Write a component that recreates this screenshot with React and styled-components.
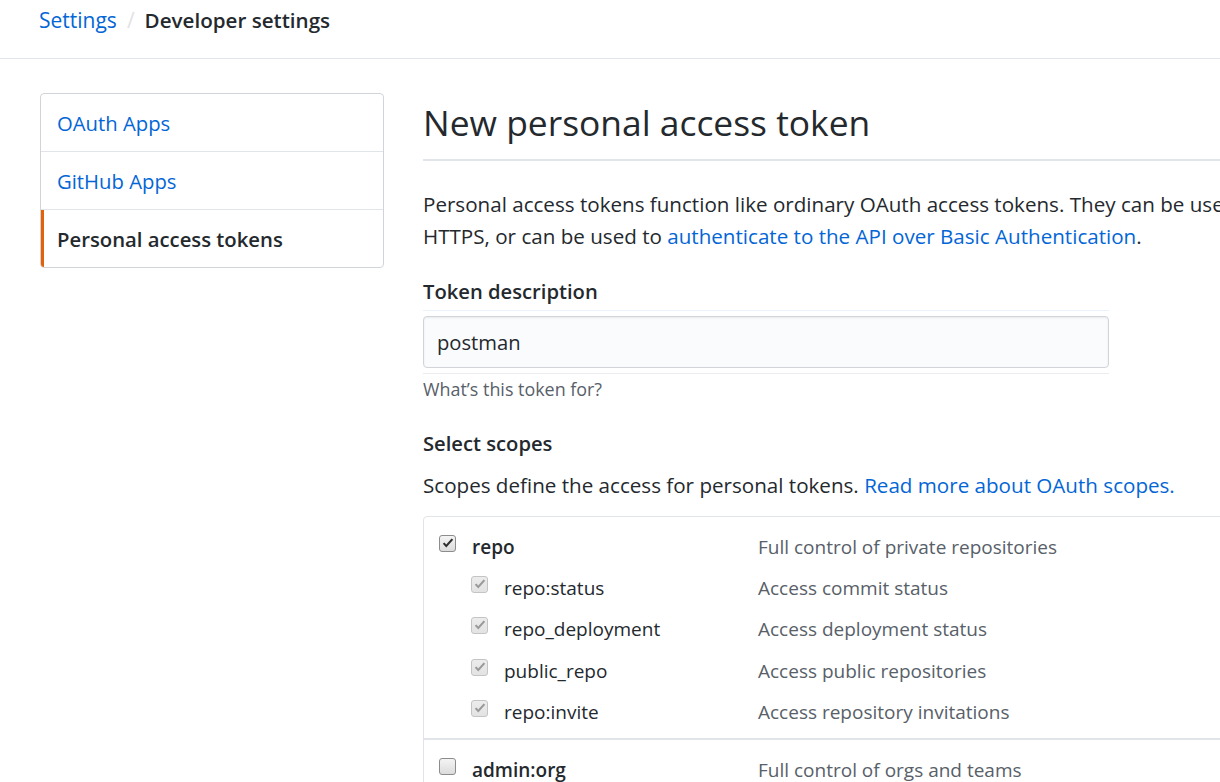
import React from "react";
import styled, { createGlobalStyle } from "styled-components";

const GlobalStyle = createGlobalStyle`
  html, body {
    margin: 0;
    padding: 0;
    overflow: hidden;
    background: #fff;
  }
  body {
    font-family: "Open Sans", "Noto Sans", sans-serif;
    color: #24292e;
  }
`;

const Page = styled.div`
  width: 1220px;
  height: 782px;
  overflow: hidden;
`;

const Header = styled.div`
  height: 59px;
  border-bottom: 1px solid #e1e4e8;
  box-sizing: border-box;
  padding-left: 39px;
  display: flex;
  align-items: center;
  padding-bottom: 18px;
  font-size: 21px;
`;

const Crumb = styled.a`
  color: #0366d6;
  text-decoration: none;
`;

const Slash = styled.span`
  color: #dfe2e5;
  margin: 0 10px;
`;

const Current = styled.span`
  font-weight: 600;
  color: #24292e;
  font-size: 20.6px;
`;

const Layout = styled.div`
  display: flex;
  align-items: flex-start;
  gap: 39px;
  padding: 34px 0 0 40px;
`;

const Sidebar = styled.nav`
  width: 344px;
  flex-shrink: 0;
  box-sizing: border-box;
  border: 1px solid #d1d5da;
  border-radius: 4px;
  overflow: hidden;
`;

const MenuItem = styled.a`
  display: flex;
  align-items: center;
  height: 58px;
  box-sizing: border-box;
  padding-left: ${(p) => (p.selected ? "13px" : "16px")};
  border-left: ${(p) => (p.selected ? "3px solid #e36209" : "none")};
  border-bottom: 1px solid #e1e4e8;
  font-size: 20.3px;
  color: ${(p) => (p.selected ? "#24292e" : "#0366d6")};
  font-weight: ${(p) => (p.selected ? 600 : 400)};
  text-decoration: none;
  &:last-child {
    border-bottom: none;
    height: 57px;
  }
`;

const Content = styled.main`
  width: 1100px;
  flex-shrink: 0;
`;

const Title = styled.h1`
  margin: 0;
  font-size: 35.4px;
  font-weight: 400;
  line-height: 42px;
  padding: 8px 0 16px;
  border-bottom: 2px solid #e1e4e8;
`;

const Lead = styled.p`
  margin: 27px 0 0;
  font-size: 20.6px;
  line-height: 32px;
  white-space: nowrap;
`;

const Link = styled.a`
  color: #0366d6;
  text-decoration: none;
`;

const Label = styled.h3`
  margin: ${(p) => p.top || "23px"} 0 0;
  font-size: 20.2px;
  font-weight: 600;
  line-height: 32px;
`;

const Field = styled.div`
  margin-top: 3px;
  padding: 5px 0 5px;
  width: 686px;
  border-top: 1px solid #eaf1fb;
  border-bottom: 1px solid #eaecef;
`;

const Input = styled.div`
  box-sizing: border-box;
  width: 686px;
  height: 52px;
  border: 1px solid #d1d5da;
  border-radius: 4px;
  background: #fafbfc;
  box-shadow: inset 0 1px 2px rgba(27, 31, 35, 0.075);
  display: flex;
  align-items: center;
  padding-left: 13px;
  font-size: 20.2px;
  color: #24292e;
`;

const Note = styled.p`
  margin: 2px 0 0;
  font-size: 17.9px;
  line-height: 26px;
  color: #586069;
`;

const Text = styled.p`
  margin: 10px 0 0;
  font-size: 20.6px;
  line-height: 32px;
`;

const ScopeBox = styled.div`
  margin-top: 15px;
  border: 1px solid #e1e4e8;
  border-radius: 4px;
`;

const Group = styled.div`
  padding: 9px 0 6px;
  & + & {
    border-top: 2px solid #e1e4e8;
    padding-top: 9px;
  }
`;

const Row = styled.div`
  display: grid;
  grid-template-columns: 319px 1fr;
  align-items: center;
  height: 41.3px;
  padding-left: 15px;
`;

const Name = styled.div`
  display: flex;
  align-items: center;
  gap: 16px;
  padding-left: ${(p) => (p.child ? "32px" : "0")};
  font-size: 19px;
  font-weight: ${(p) => (p.child ? 400 : 600)};
  color: #24292e;
`;

const Desc = styled.div`
  font-size: 19px;
  color: #586069;
`;

const Box = styled.span`
  width: 17px;
  height: 17px;
  box-sizing: border-box;
  flex-shrink: 0;
  border-radius: 3px;
  margin-top: -7px;
  border: 1px solid ${(p) => (p.disabled ? "#c4c4c4" : "#8c8c8c")};
  background: ${(p) =>
    p.disabled
      ? "linear-gradient(#ececec, #e3e3e3)"
      : "linear-gradient(#f4f4f4, #dcdcdc)"};
  display: flex;
  align-items: center;
  justify-content: center;
`;

function Checkbox({ checked, disabled }) {
  return (
    <Box disabled={disabled}>
      {checked && (
        <svg width="12" height="11" viewBox="0 0 12 11">
          <path
            d="M0.8 5.8 L4.3 9.4 L11.2 1.8 L9.6 0.6 L4.2 6.4 L2.4 4.4 Z"
            fill={disabled ? "#9a9a9a" : "#2f2f2f"}
          />
        </svg>
      )}
    </Box>
  );
}

const scopes = [
  {
    name: "repo",
    desc: "Full control of private repositories",
    checked: true,
    children: [
      ["repo:status", "Access commit status"],
      ["repo_deployment", "Access deployment status"],
      ["public_repo", "Access public repositories"],
      ["repo:invite", "Access repository invitations"],
    ],
  },
  {
    name: "admin:org",
    desc: "Full control of orgs and teams",
    checked: false,
    children: [],
  },
];

export default function App() {
  return (
    <Page>
      <GlobalStyle />
      <Header>
        <Crumb href="#">Settings</Crumb>
        <Slash>/</Slash>
        <Current>Developer settings</Current>
      </Header>
      <Layout>
        <Sidebar>
          <MenuItem href="#">OAuth Apps</MenuItem>
          <MenuItem href="#">GitHub Apps</MenuItem>
          <MenuItem href="#" selected>
            Personal access tokens
          </MenuItem>
        </Sidebar>
        <Content>
          <Title>New personal access token</Title>
          <Lead>
            Personal access tokens function like ordinary OAuth access tokens.
            They can be used instead of a password for Git over
            <br />
            HTTPS, or can be used to{" "}
            <Link href="#">authenticate to the API over Basic Authentication</Link>.
          </Lead>
          <Label>Token description</Label>
          <Field>
            <Input>postman</Input>
          </Field>
          <Note>What’s this token for?</Note>
          <Label top="25px">Select scopes</Label>
          <Text>
            Scopes define the access for personal tokens.{" "}
            <Link href="#">Read more about OAuth scopes.</Link>
          </Text>
          <ScopeBox>
            {scopes.map((s) => (
              <Group key={s.name}>
                <Row>
                  <Name>
                    <Checkbox checked={s.checked} />
                    {s.name}
                  </Name>
                  <Desc>{s.desc}</Desc>
                </Row>
                {s.children.map(([n, d]) => (
                  <Row key={n}>
                    <Name child>
                      <Checkbox checked disabled />
                      {n}
                    </Name>
                    <Desc>{d}</Desc>
                  </Row>
                ))}
              </Group>
            ))}
          </ScopeBox>
        </Content>
      </Layout>
    </Page>
  );
}
